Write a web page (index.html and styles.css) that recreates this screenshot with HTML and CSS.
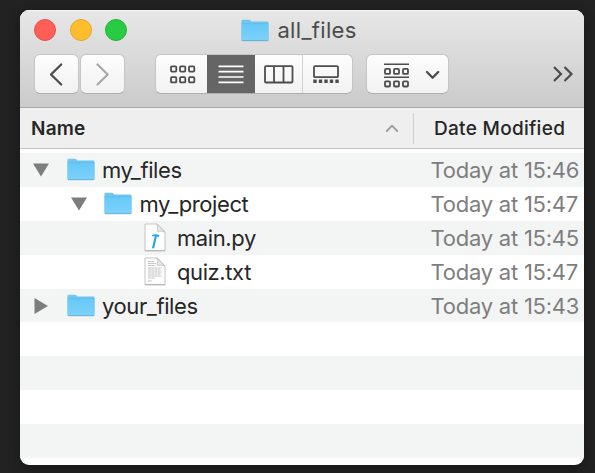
FILE: index.html
```html
<!DOCTYPE html>
<html lang="en">
<head>
<meta charset="utf-8">
<title>all_files</title>
<link rel="stylesheet" href="styles.css">
</head>
<body>
<svg class="defs" width="0" height="0" aria-hidden="true">
  <defs>
    <linearGradient id="blue" x1="0" y1="0" x2="0" y2="1"><stop offset="0" stop-color="#66c8f7"/><stop offset="1" stop-color="#7dd2fa"/></linearGradient>
    <symbol id="folder" viewBox="0 0 28 23">
      <path d="M.5 2Q.5.7 1.8.7H8Q9 .7 9.6 1.6L10.2 2.6H26.3Q27.5 2.6 27.5 3.8V20H.5Z" fill="#71c6ee"/>
      <path d="M.5 4.6H27.5V20.6Q27.5 21.6 26.5 21.6H1.5Q.5 21.6 .5 20.6Z" fill="url(#blue)"/>
      <path d="M.5 4.4H27.5" stroke="#5dbbe8" stroke-width=".7"/>
      <path d="M.6 20.8Q.8 21.7 1.8 21.7H26.2Q27.2 21.7 27.4 20.8" fill="none" stroke="#4fa5cf" stroke-width=".9"/>
    </symbol>
    <symbol id="page" viewBox="0 0 22 29">
      <path d="M1 1H13.3L21 8.7V27.5H1Z" fill="#fefefe" stroke="#c4c4c4" stroke-width="1"/>
      <path d="M.8 27.9H21.2" stroke="#aaa" stroke-width=".8"/>
      <path d="M13 1.2Q14 5 13.2 8.3Q17 7.5 20.8 9Z" fill="#e8e8e8" stroke="#bdbdbd" stroke-width=".8"/>
    </symbol>
  </defs>
</svg>
<main class="window">
  <header class="toolbar">
    <div class="titlebar">
      <div class="lights"><i class="light red"></i><i class="light yellow"></i><i class="light green"></i></div>
      <h1 class="title"><svg class="folder" width="28" height="23"><use href="#folder"/></svg><span class="title-text">all_files</span></h1>
    </div>
    <div class="tools">
      <div class="nav">
        <button class="btn nav-btn" aria-label="Back"><svg width="45" height="39"><path d="M27.2 9.5 17 19.5 27.2 29.5" fill="none" stroke="#4c4c4c" stroke-width="2.3" stroke-linecap="round" stroke-linejoin="round"/></svg></button>
        <button class="btn nav-btn" aria-label="Forward"><svg width="45" height="39"><path d="M17.5 9.5 27.7 19.5 17.5 29.5" fill="none" stroke="#a8a8a8" stroke-width="2.2" stroke-linecap="round" stroke-linejoin="round"/></svg></button>
      </div>
      <div class="btn views">
        <div class="view v1"><svg width="26" height="20"><g class="line"><rect x="1" y="1.3" width="5.3" height="5.3" rx="1"/><rect x="10" y="1.3" width="5.3" height="5.3" rx="1"/><rect x="19" y="1.3" width="5.3" height="5.3" rx="1"/><rect x="1" y="12.1" width="5.3" height="5.3" rx="1"/><rect x="10" y="12.1" width="5.3" height="5.3" rx="1"/><rect x="19" y="12.1" width="5.3" height="5.3" rx="1"/></g></svg></div>
        <div class="view v2"><svg width="26" height="20"><path d="M.5 1.3H25.5M.5 6.6H25.5M.5 12H25.5M.5 17.3H25.5" stroke="#fff" stroke-width="1.7"/></svg></div>
        <div class="view v3"><svg width="30" height="20"><g class="line"><rect x="1" y="1.2" width="27.5" height="16.3" rx="1"/><path d="M10 1.5V17.3M19.5 1.5V17.3"/></g></svg></div>
        <div class="view v4"><svg width="26" height="20"><g class="line"><rect x="1" y="1.2" width="24" height="11" rx="1"/></g><path d="M.3 16.3H25.7" stroke="#4c4c4c" stroke-width="3.4" stroke-dasharray="3.4 2.1"/></svg></div>
      </div>
      <button class="btn group" aria-label="Group"><svg width="82" height="39"><g class="line"><path d="M18 9.3H43M18 22.2H43" stroke-width="1.6"/><rect x="19" y="13.9" width="5" height="5" rx="1"/><rect x="28" y="13.9" width="5" height="5" rx="1"/><rect x="37" y="13.9" width="5" height="5" rx="1"/><rect x="19" y="26.3" width="5" height="5.2" rx="1"/><rect x="28" y="26.3" width="5" height="5.2" rx="1"/><rect x="37" y="26.3" width="5" height="5.2" rx="1"/></g><path d="M61 17 66.6 22.7 72.2 17" fill="none" stroke="#4c4c4c" stroke-width="2.3" stroke-linecap="round" stroke-linejoin="round"/></svg></button>
      <svg class="more" width="22" height="20"><path d="M2 3 9 10 2 17M12.5 3 19.5 10 12.5 17" fill="none" stroke="#4c4c4c" stroke-width="2.2"/></svg>
    </div>
  </header>
  <div class="columns">
    <div class="col-name"><span class="name-label">Name</span><svg width="14" height="9"><path d="M1.2 7.5 7 1.7 12.8 7.5" fill="none" stroke="#999" stroke-width="1.8"/></svg></div>
    <div class="col-date"><span class="date-label">Date Modified</span></div>
  </div>
  <div class="list">
    <div class="row"><div class="cell"><svg class="arrow" width="16" height="14"><path d="M0 .5H16L8 13.5Z"/></svg><svg class="folder" width="28" height="23"><use href="#folder"/></svg><span>my_files</span></div><time>Today at 15:46</time></div>
    <div class="row"><div class="cell level2"><svg class="arrow" width="16" height="14"><path d="M0 .5H16L8 13.5Z"/></svg><svg class="folder" width="28" height="23"><use href="#folder"/></svg><span>my_project</span></div><time>Today at 15:47</time></div>
    <div class="row"><div class="cell level3"><svg class="file" width="22" height="29"><use href="#page"/><path d="M8.3 11.8Q12 10.5 15.3 12.1L14.9 13.9L12.8 13.4L10.2 25.2H7.9L10.8 13.3L8.1 13.2Z" fill="#20a8ef"/></svg><span>main.py</span></div><time>Today at 15:45</time></div>
    <div class="row"><div class="cell level3"><svg class="file" width="22" height="29"><use href="#page"/><path d="M4 4.5H10M4 6.5H12M4 8.5H11.5M4 11H17.5M4 13H17M4 15H18M4 17H17M4 19H17.8M4 21H11M4 24H8" stroke="#bbb" stroke-width=".9" stroke-dasharray="2.8 .4"/></svg><span>quiz.txt</span></div><time>Today at 15:47</time></div>
    <div class="row"><div class="cell"><svg class="arrow" width="16" height="16"><path d="M1.5 0V16L15 8Z"/></svg><svg class="folder" width="28" height="23"><use href="#folder"/></svg><span>your_files</span></div><time>Today at 15:43</time></div>
    <div class="row"></div><div class="row"></div><div class="row"></div><div class="row"></div>
  </div>
</main>
</body>
</html>
```
FILE: styles.css
```css
* { box-sizing: border-box; }
body {
  margin: 0;
  height: 473px;
  padding: 10px 11px 8px 20px;
  overflow: hidden;
  background: #222;
  font-family: Inter, "Liberation Sans", sans-serif;
}
svg { display: block; flex: none; }
.defs { position: absolute; }
.window {
  height: 455px;
  border-radius: 9px;
  overflow: hidden;
  background: #fff;
  box-shadow: 0 4px 12px rgba(0, 0, 0, .35);
}
.toolbar {
  height: 98px;
  background: linear-gradient(#e7e7e7, #cbcbcb);
  border-bottom: 1px solid #a8a8a8;
  box-shadow: inset 0 1px #f5f5f5;
}
.titlebar { height: 44px; display: flex; }
.lights { display: flex; gap: 13.7px; padding: 8.5px 0 0 14px; width: 221.4px; }
.light { width: 22px; height: 22px; border-radius: 50%; border: 1px solid; }
.red { background: #ff5f57; border-color: #e6504a; }
.yellow { background: #ffbd2e; border-color: #e2a42c; }
.green { background: #28cb41; border-color: #22b435; }
.title { margin: 0; padding-top: 8px; display: flex; gap: 8px; }
.title-text { font-size: 22px; font-weight: 400; line-height: 25px; letter-spacing: .33px; color: #4b4b4b; }
.title .folder { margin: 1px 0 0; }
.tools { display: flex; align-items: flex-start; padding-left: 14px; }
.nav { display: flex; gap: 1px; margin-right: 30px; }
.btn {
  height: 40px;
  padding: 0;
  border: 1px solid #c5c5c5;
  border-bottom-color: #aeaeae;
  border-radius: 6px;
  background: linear-gradient(#fdfdfd, #f2f2f2);
  overflow: hidden;
}
.nav-btn { width: 45px; }
.nav-btn svg { margin-left: -1px; }
.views { width: 198px; display: flex; margin-right: 13px; }
.view { height: 40px; display: flex; justify-content: center; padding-top: 10px; }
.v1 { width: 51px; padding-left: 3px; }
.v2 { width: 48px; background: #656565; }
.v3 { width: 48px; padding-left: 1px; border-right: 1px solid #d2d2d2; }
.v4 { width: 49px; padding-right: 3px; }
.line { fill: none; stroke: #4c4c4c; stroke-width: 1.8; }
.group { width: 83px; }
.group svg { margin-left: -1px; }
.more { margin: 10px 0 0 103px; }
.columns { height: 41px; display: flex; background: #efefef; border-bottom: 1px solid #c6c6c6; align-items: center; }
.col-name { width: 394px; height: 31px; display: flex; align-items: center; justify-content: space-between; padding: 0 14px 0 11px; border-right: 1px solid #d0d0d0; }
.name-label { font-size: 19px; font-weight: 600; letter-spacing: .2px; color: #262626; }
.col-date { padding-left: 20px; }
.date-label { font-size: 19px; font-weight: 500; letter-spacing: .3px; color: #262626; white-space: nowrap; }
.list { padding-top: 4px; }
.row { height: 33.9px; display: flex; align-items: center; font-size: 22px; line-height: 34px; letter-spacing: -.4px; color: #262626; }
.row:nth-child(odd) { background: #f3f5f5; }
.cell { width: 410.5px; padding-left: 13px; display: flex; align-items: center; }
.level2 { padding-left: 50.5px; }
.level3 { padding-left: 124px; }
.arrow { fill: #7d7d7d; margin-right: 17.5px; }
.folder { margin-right: 7.5px; }
.file { margin-right: 11px; }
time { color: #7e7e7e; white-space: nowrap; letter-spacing: -.23px; }
```
